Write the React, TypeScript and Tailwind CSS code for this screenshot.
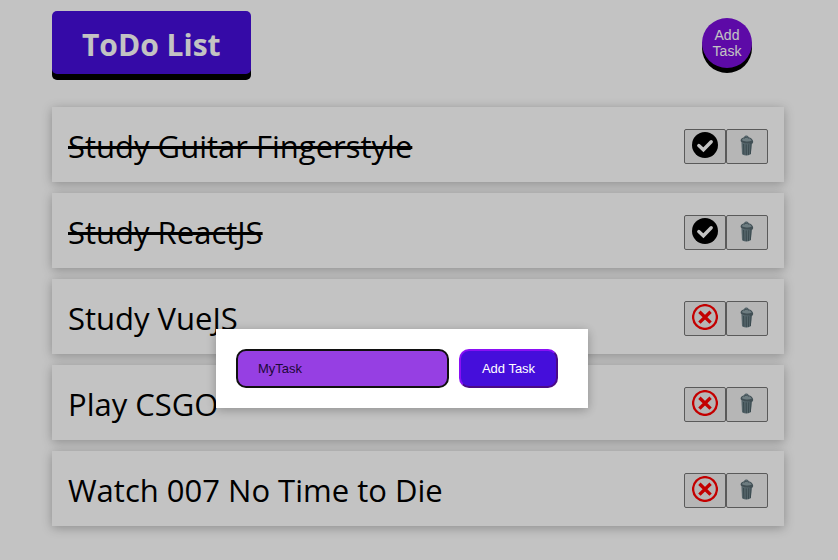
import { useState } from "react";

type Task = { title: string; done: boolean };

const initialTasks: Task[] = [
  { title: "Study Guitar Fingerstyle", done: true },
  { title: "Study ReactJS", done: true },
  { title: "Study VueJS", done: false },
  { title: "Play CSGO", done: false },
  { title: "Watch 007 No Time to Die", done: false },
];

function DoneIcon() {
  return (
    <svg viewBox="0 0 26 26" className="size-[26px]" aria-hidden="true">
      <circle cx="13" cy="13" r="13" fill="#000" />
      <path d="M6.8 13.6l4.6 4.2 7.8-8" fill="none" stroke="#fff" strokeWidth="3.4" strokeLinecap="round" />
    </svg>
  );
}

function PendingIcon() {
  return (
    <svg viewBox="0 0 26 26" className="size-[26px]" aria-hidden="true">
      <circle cx="13" cy="13" r="11.9" fill="none" stroke="#ff0000" strokeWidth="2.3" />
      <path d="M7.4 7.8l11.2 10.8M18.6 7.8L7.4 18.6" fill="none" stroke="#ff0000" strokeWidth="3.4" />
    </svg>
  );
}

function TrashIcon() {
  return (
    <svg viewBox="0 0 14 21" className="h-[21px] w-[14px]" aria-hidden="true">
      <path d="M1.4 7.2L2 19.2Q6.4 21.6 10.8 19.2L12 7Z" fill="#71868d" />
      <path d="M3.6 9l.3 10.6M6.2 9.4l.1 10.8M8.8 9.2l-.3 10.6M11 8.6l-.6 10.4" stroke="#465a61" strokeWidth=".9" fill="none" />
      <path d="M.6 5.2Q1 2.8 5.2 2Q10.6 1.4 12.8 5.2Q13.8 7 12.6 8.6Q11 9.4 9.6 8.4Q5 8.4 2 7.4Q.4 6.8.6 5.2Z" fill="#55686f" />
      <path d="M1.6 4.9Q3 2.8 6.6 2.7Q10.4 2.8 11.8 5.6Q9 6.9 5 6.3Q2.6 5.9 1.6 4.9Z" fill="#8fa2a8" />
      <path d="M4.4 3.8Q4.2 1 6.4 1.1Q8.4 1.3 8.6 3.8" fill="none" stroke="#657a82" strokeWidth="1.1" />
    </svg>
  );
}

export default function App() {
  const [tasks, setTasks] = useState(initialTasks);
  const [draft, setDraft] = useState("MyTask");

  const toggle = (index: number) =>
    setTasks(tasks.map((t, i) => (i === index ? { ...t, done: !t.done } : t)));
  const remove = (index: number) => setTasks(tasks.filter((_, i) => i !== index));

  return (
    <div className="min-h-screen bg-white pr-[54px] pl-[52px] pt-[11px] font-['Segoe_UI','Open_Sans',sans-serif] text-black">
      <header className="flex items-start justify-between pr-8">
        <h1 className="rounded-[5px] bg-[#460edb] px-[30px] pt-[14px] pb-[10px] text-[30px] leading-[39px] font-bold text-white shadow-[0_6px_0_#000]">
          ToDo List
        </h1>
        <button
          type="button"
          className="mt-[7px] size-[50px] rounded-full bg-[#7a0edb] font-['Liberation_Sans',sans-serif] text-sm leading-4 text-white shadow-[0_5px_0_#000]"
        >
          Add Task
        </button>
      </header>

      <ul className="flex flex-col gap-[11px] pt-[33px]">
        {tasks.map((task, index) => (
          <li
            key={task.title}
            className="flex h-[75px] items-center justify-between bg-white px-4 shadow-[0_2px_10px_rgba(0,0,0,0.28)]"
          >
            <span className={task.done ? "pt-[2px] text-[31px] leading-10 line-through decoration-[3px]" : "pt-[2px] text-[31px] leading-10"}>
              {task.title}
            </span>
            <div className="flex pt-1">
              <button
                type="button"
                aria-label="Toggle done"
                onClick={() => toggle(index)}
                className="flex h-[35px] w-[42px] items-start justify-center rounded-[2px] border border-[#767676] bg-[#efefef] pt-[2px]"
              >
                {task.done ? <DoneIcon /> : <PendingIcon />}
              </button>
              <button
                type="button"
                aria-label="Delete task"
                onClick={() => remove(index)}
                className="flex h-[35px] w-[42px] items-start justify-center rounded-[2px] border border-[#767676] bg-[#efefef] pt-[5px]"
              >
                <TrashIcon />
              </button>
            </div>
          </li>
        ))}
      </ul>

      <div className="fixed inset-0 bg-black/[0.235]">
        <form
          onSubmit={(event) => {
            event.preventDefault();
            setTasks([...tasks, { title: draft, done: false }]);
          }}
          className="absolute top-[329px] left-[216px] flex gap-[10px] bg-white py-5 pr-[30px] pl-5 font-['Liberation_Sans',sans-serif] text-[13px] shadow-[0_2px_10px_rgba(0,0,0,0.28)]"
        >
          <input
            aria-label="Task name"
            value={draft}
            onChange={(event) => setDraft(event.target.value)}
            className="h-[39px] w-[213px] rounded-[10px] border-2 border-[#101010] bg-[#963fe3] px-5 text-[#1c0838] outline-none"
          />
          <button
            type="submit"
            className="h-[39px] w-[99px] rounded-[10px] border-2 border-t-[#8a0ff5] border-r-[#4b0a87] border-b-[#4b0a87] border-l-[#8a0ff5] bg-[#450edb] text-white"
          >
            Add Task
          </button>
        </form>
      </div>
    </div>
  );
}
